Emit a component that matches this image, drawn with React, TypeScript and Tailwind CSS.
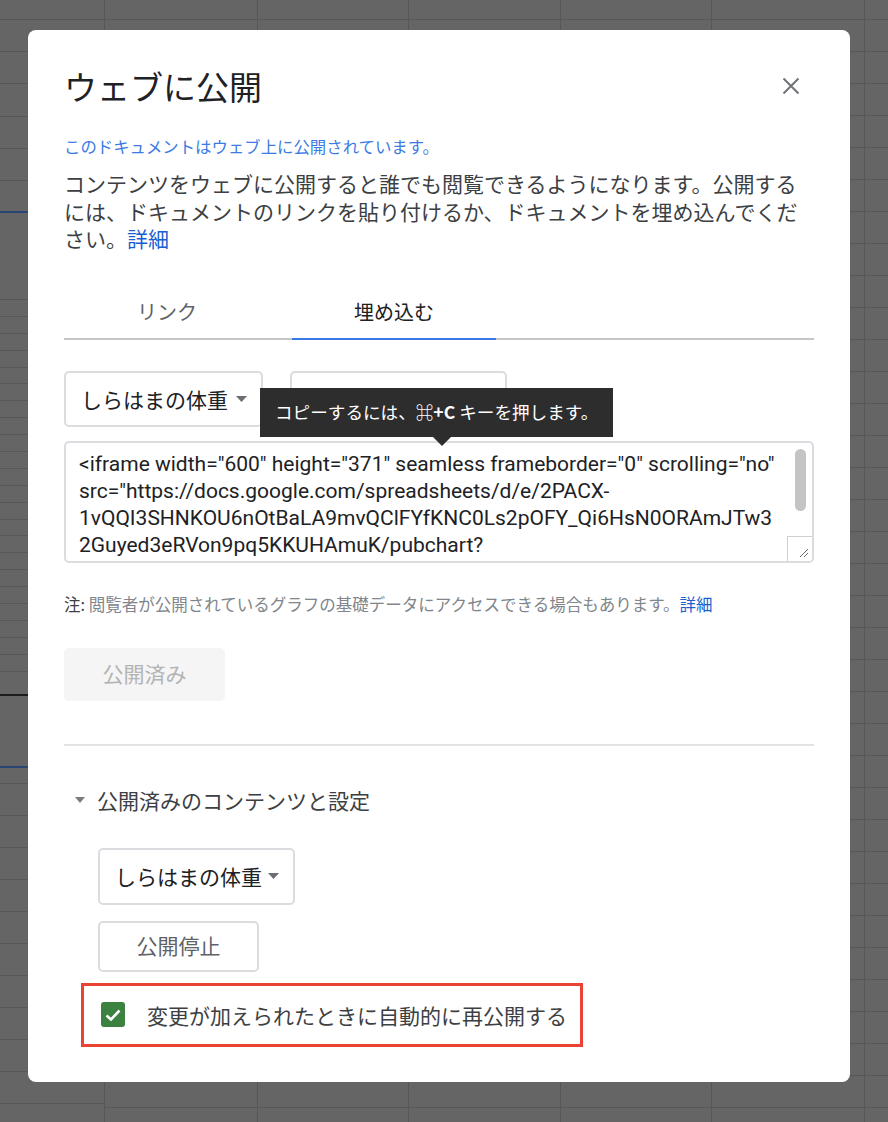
import React from "react";

const uniformRows = Array.from({ length: 35 });

function UniformColumn({ className }: { className: string }) {
  return (
    <div className={"flex flex-col shrink-0 border-r border-[#575757] " + className}>
      <div className="h-[20px] shrink-0 border-b border-[#575757]" />
      {uniformRows.map((_, i) => (
        <div key={i} className="h-[32px] shrink-0 border-b border-[#575757]" />
      ))}
    </div>
  );
}

const firstColRows: string[] = [
  "h-[20px] border-b border-[#575757]",
  "h-[32px] border-b border-[#575757]",
  "h-[32px] border-b border-[#575757]",
  "h-[33px] border-b border-[#575757]",
  "h-[32px] border-b border-[#575757]",
  "h-[32px] border-b border-[#575757]",
  "h-[32px] border-b-2 border-[#2b4674]",
  "h-[87px] border-b border-[#575757]",
  ...Array.from({ length: 22 }).map(() => "h-[16.9px] border-b border-[#585858]"),
  "h-[24px] border-b-2 border-[#1c1c1c]",
  "h-[72px] border-b-2 border-[#2b4674]",
  "h-[16px] border-b border-[#575757]",
  ...Array.from({ length: 12 }).map(() => "h-[32px] border-b border-[#575757]"),
];

function Caret({ className }: { className?: string }) {
  return (
    <svg width="11" height="6" viewBox="0 0 11 6" className={className}>
      <path d="M0 0 L11 0 L5.5 6 Z" fill="#6b6e72" />
    </svg>
  );
}

function Dropdown({ className }: { className: string }) {
  return (
    <div
      className={
        "flex items-center justify-between rounded-[5px] border-2 border-[#dadce0] bg-white pl-[15px] pr-[14px] " +
        className
      }
    >
      <span className="text-[21px] leading-[28px] text-[#202124]">しらはまの体重</span>
      <Caret />
    </div>
  );
}

const codeLines = [
  '<iframe width="600" height="371" seamless frameborder="0" scrolling="no"',
  'src="https://docs.google.com/spreadsheets/d/e/2PACX-',
  "1vQQI3SHNKOU6nOtBaLA9mvQClFYfKNC0Ls2pOFY_Qi6HsN0ORAmJTw3",
  "2Guyed3eRVon9pq5KKUHAmuK/pubchart?",
  'oid=1281420378&amp;format=interactive"></iframe>',
];

export default function App() {
  return (
    <div className="relative h-[1122px] w-[888px] overflow-hidden bg-[#656565] font-['Noto_Sans_CJK_JP','Noto_Sans',sans-serif]">
      {/* spreadsheet grid behind the modal */}
      <div className="flex h-full">
        <div className="flex w-[105px] shrink-0 flex-col border-r border-[#575757]">
          {firstColRows.map((c, i) => (
            <div key={i} className={"shrink-0 " + c} />
          ))}
        </div>
        <UniformColumn className="w-[153px]" />
        <UniformColumn className="w-[151px]" />
        <UniformColumn className="w-[152px]" />
        <UniformColumn className="w-[151px]" />
        <UniformColumn className="w-[153px]" />
        <UniformColumn className="w-[40px]" />
      </div>

      {/* modal dialog */}
      <div className="absolute left-[28px] top-[30px] flex h-[1052px] w-[822px] flex-col rounded-[8px] bg-white px-[36px]">
        <div className="mt-[36px] flex h-[40px] items-center justify-between">
          <h1 className="text-[33px] font-normal leading-[40px] text-[#202124]">ウェブに公開</h1>
          <svg width="18" height="18" viewBox="0 0 18 18" className="mr-[14px]">
            <path d="M1.5 1.5 L16.5 16.5 M16.5 1.5 L1.5 16.5" stroke="#6f7377" strokeWidth="2" />
          </svg>
        </div>

        <p className="mt-[30px] whitespace-nowrap text-[16.4px] leading-[20px] text-[#3c7be3]">
          このドキュメントはウェブ上に公開されています。
        </p>

        <div className="mt-[14px] text-[21px] leading-[27.5px] text-[#3c4043]">
          <div className="whitespace-nowrap">コンテンツをウェブに公開すると誰でも閲覧できるようになります。公開する</div>
          <div className="whitespace-nowrap">には、ドキュメントのリンクを貼り付けるか、ドキュメントを埋め込んでくだ</div>
          <div className="whitespace-nowrap">
            さい。<span className="text-[#1a5fd0]">詳細</span>
          </div>
        </div>

        {/* tabs */}
        <div className="mt-[34px] flex flex-col">
          <div className="relative z-10 -mb-[2px] flex gap-[22px]">
            <div className="flex h-[53px] w-[206px] items-center justify-center pb-[2px] text-[20px] text-[#5f6368]">
              リンク
            </div>
            <div className="flex h-[53px] w-[204px] items-center justify-center border-b-2 border-[#3b78e7] text-[20px] text-[#202124]">
              埋め込む
            </div>
          </div>
          <div className="h-[2px] bg-[#c6c6c6]" />
        </div>

        {/* dropdowns + tooltip */}
        <div className="relative mt-[31px] flex">
          <Dropdown className="h-[56px] w-[199px]" />
          <div className="ml-[27px] h-[56px] w-[217px] rounded-[5px] border-2 border-[#dadce0]" />
          <div className="absolute left-[196px] top-[17px] z-20 flex h-[49px] w-[353px] items-center bg-[#2d2d2d] pl-[15px]">
            <span className="whitespace-nowrap text-[17.6px] leading-[22px] text-white">
              コピーするには、<span className="font-bold">⌘+C</span> キーを押します。
            </span>
            <svg width="18" height="9" viewBox="0 0 18 9" className="absolute left-[173px] top-[49px]">
              <path d="M0 0 L18 0 L9 9 Z" fill="#2d2d2d" />
            </svg>
          </div>
        </div>

        {/* embed code textarea */}
        <div className="relative mt-[14px] h-[122px] overflow-hidden rounded-[5px] border-2 border-[#dadce0]">
          <div className="pl-[13px] pt-[8px] font-['Roboto','Liberation_Sans',sans-serif] text-[21px] leading-[27.3px] text-[#202124]">
            {codeLines.map((l, i) => (
              <div key={i} className="whitespace-nowrap">
                {l}
              </div>
            ))}
          </div>
          <div className="absolute right-[6px] top-[6px] h-[62px] w-[11px] rounded-full bg-[#c4c4c4]" />
          <div className="absolute bottom-0 right-0 flex h-[25px] w-[25px] items-end justify-end border-l border-t border-[#d0d0d0] bg-white">
            <svg width="12" height="12" viewBox="0 0 12 12" className="mb-[3px] mr-[3px]">
              <path d="M11 3 L3 11 M11 7 L7 11" stroke="#6a6a6a" strokeWidth="1" />
            </svg>
          </div>
        </div>

        <p className="mt-[31px] whitespace-nowrap text-[16.5px] leading-[20px] text-[#80868b]">
          <span className="text-[#3c4043]">注:</span> 閲覧者が公開されているグラフの基礎データにアクセスできる場合もあります。
          <span className="text-[#1a5fd0]">詳細</span>
        </p>

        <div className="mt-[34px] flex h-[53px] w-[161px] items-center justify-center rounded-[5px] bg-[#f5f5f5] text-[21px] text-[#b3b3b3]">
          公開済み
        </div>

        <div className="mt-[43px] h-[2px] bg-[#e3e3e3]" />

        <div className="mt-[40px] flex h-[28px] items-center">
          <svg width="10" height="6" viewBox="0 0 10 6" className="ml-[11px]">
            <path d="M0 0 L10 0 L5 6 Z" fill="#7a7d81" />
          </svg>
          <span className="ml-[12px] text-[21px] leading-[28px] text-[#3c4043]">公開済みのコンテンツと設定</span>
        </div>

        <Dropdown className="ml-[34px] mt-[34px] h-[57px] w-[197px]" />

        <div className="ml-[34px] mt-[16px] flex h-[51px] w-[161px] items-center justify-center rounded-[5px] border-2 border-[#dadce0] text-[21px] text-[#5f6368]">
          公開停止
        </div>

        <div className="ml-[17px] mt-[11px] flex h-[64px] w-[502px] items-center border-[3px] border-[#ea4335] pl-[17px]">
          <div className="flex h-[25px] w-[24px] items-center justify-center rounded-[3px] bg-[#3b8140]">
            <svg width="16" height="12" viewBox="0 0 16 12">
              <path d="M1.5 6.5 L6 10.5 L14.5 1.5" stroke="white" strokeWidth="2.6" fill="none" />
            </svg>
          </div>
          <span className="ml-[22px] whitespace-nowrap text-[21px] leading-[28px] text-[#3c4043]">
            変更が加えられたときに自動的に再公開する
          </span>
        </div>
      </div>
    </div>
  );
}
